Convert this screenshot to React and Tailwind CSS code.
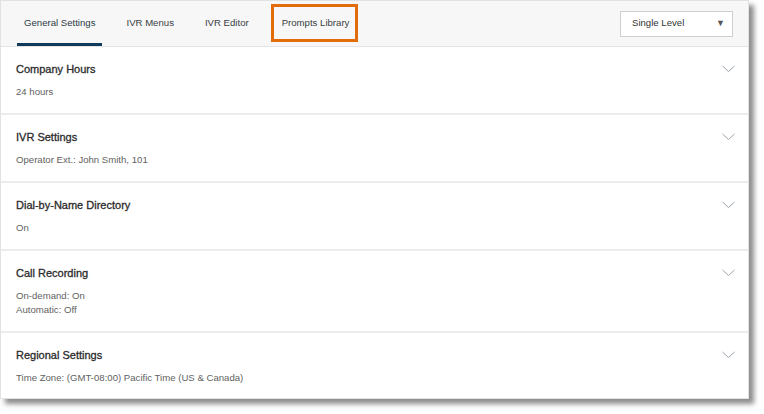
import React from "react";

const sections = [
  { title: "Company Hours", lines: ["24 hours"] },
  { title: "IVR Settings", lines: ["Operator Ext.: John Smith, 101"] },
  { title: "Dial-by-Name Directory", lines: ["On"] },
  { title: "Call Recording", lines: ["On-demand: On", "Automatic: Off"] },
  { title: "Regional Settings", lines: ["Time Zone: (GMT-08:00) Pacific Time (US & Canada)"] },
];

function Chevron() {
  return (
    <svg width="13" height="8" viewBox="0 0 13 8" className="shrink-0">
      <path d="M0.5 1 L6.5 6.5 L12.5 1" fill="none" stroke="#9aa3ad" strokeWidth="1" />
    </svg>
  );
}

export default function App() {
  const tabs = ["General Settings", "IVR Menus", "IVR Editor", "Prompts Library"];
  return (
    <div className="w-[764px] h-[414px] bg-white font-['Liberation_Sans',Arial,sans-serif]">
      <div className="w-[749px] h-[399px] bg-white border border-[#e2e2e2] shadow-[5px_5px_5px_rgba(0,0,0,0.45)] flex flex-col">
        <div className="h-[46px] bg-[#f7f7f7] border-b border-[#e4e4e4] flex items-stretch pl-[16px] pr-[15px] shrink-0">
          <div className="flex items-stretch gap-[17px]">
            {tabs.map((t, i) => (
              <div
                key={t}
                className={
                  "relative flex items-center px-[7px] text-[9.6px] " +
                  (i === 0
                    ? "text-[#2d3a45] border-b-[3px] border-[#0f3a5c] pt-[3px]"
                    : "text-[#3a3f44]") +
                  (i === 3 ? " ml-[2px]" : "")
                }
              >
                {t}
                {i === 3 && (
                  <span className="absolute left-[-4px] right-[-2px] top-[3px] bottom-[4px] border-[3px] border-[#e36c0a]" />
                )}
              </div>
            ))}
          </div>
          <div className="ml-auto flex items-center">
            <div className="w-[113px] h-[26px] bg-white border border-[#cfcfcf] flex items-center pl-[11px] pr-[7px] text-[9.6px] text-[#333]">
              <span>Single Level</span>
              <span className="ml-auto text-[9px] text-[#555]">▼</span>
            </div>
          </div>
        </div>
        {sections.map((s, i) => (
          <div
            key={s.title}
            className={
              "flex items-start pl-[15px] pr-[13px] pt-[15px] pb-[14px] " +
              (i < sections.length - 1 ? "border-b-2 border-[#ececec]" : "")
            }
          >
            <div className="flex-1">
              <div className="text-[11px] leading-[14px] text-[#2b2b2b] [-webkit-text-stroke:0.3px_#2b2b2b]">
                {s.title}
              </div>
              <div className="mt-[9px]">
                {s.lines.map((l) => (
                  <div key={l} className="text-[9.6px] leading-[14px] text-[#5f5f5f]">
                    {l}
                  </div>
                ))}
              </div>
            </div>
            <div className="pt-[3px]">
              <Chevron />
            </div>
          </div>
        ))}
      </div>
    </div>
  );
}
